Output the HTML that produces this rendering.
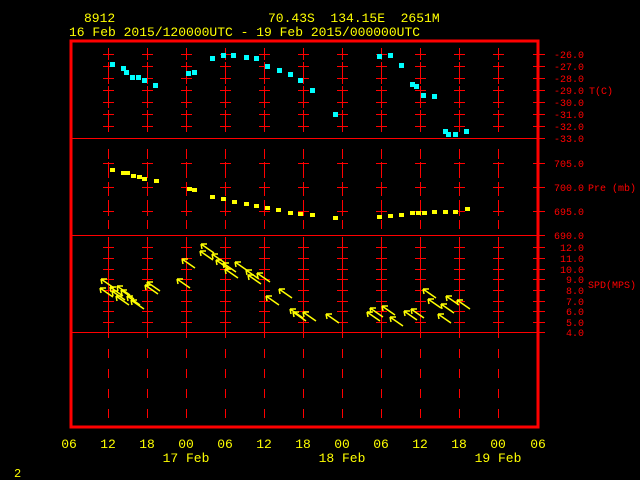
<!DOCTYPE html>
<html><head><style>
body{margin:0;background:#000;width:640px;height:480px;overflow:hidden}
svg{display:block}
text{font-family:"Liberation Mono",monospace}
</style></head><body>
<svg width="640" height="480" viewBox="0 0 640 480" xmlns="http://www.w3.org/2000/svg">
<defs>
<g id="col" fill="#f00">
<rect x="0" y="48" width="1" height="12"/><rect x="0" y="62" width="1" height="22"/><rect x="0" y="86" width="1" height="22"/><rect x="0" y="110" width="1" height="22"/>
<rect x="-5" y="54" width="11" height="1"/><rect x="-5" y="66" width="11" height="1"/><rect x="-5" y="78" width="11" height="1"/><rect x="-5" y="90" width="11" height="1"/><rect x="-5" y="102" width="11" height="1"/><rect x="-5" y="114" width="11" height="1"/><rect x="-5" y="126" width="11" height="1"/>
<rect x="0" y="149" width="1" height="10"/><rect x="0" y="162" width="1" height="16"/><rect x="0" y="182" width="1" height="14"/><rect x="0" y="200" width="1" height="16"/><rect x="0" y="220" width="1" height="9"/>
<rect x="-5" y="163" width="11" height="1"/><rect x="-5" y="187" width="11" height="1"/><rect x="-5" y="211" width="11" height="1"/>
<rect x="0" y="237" width="1" height="101"/>
<rect x="-5" y="247" width="11" height="1"/><rect x="-5" y="258" width="11" height="1"/><rect x="-5" y="269" width="11" height="1"/><rect x="-5" y="279" width="11" height="1"/><rect x="-5" y="290" width="11" height="1"/><rect x="-5" y="301" width="11" height="1"/><rect x="-5" y="311" width="11" height="1"/><rect x="-5" y="322" width="11" height="1"/>
<rect x="0" y="349" width="1" height="9"/><rect x="0" y="369" width="1" height="9"/><rect x="0" y="389" width="1" height="9"/><rect x="0" y="409" width="1" height="9"/>
</g>
<g id="ar" stroke="#ff0" stroke-width="1.5" fill="none"><path d="M0 0L13 9M0 0L6 0M0 0L1 5"/></g>
</defs>
<text x="84" y="22" fill="#ff0" font-size="13">8912</text>
<text x="268" y="22" fill="#ff0" font-size="13" xml:space="preserve">70.43S  134.15E  2651M</text>
<text x="69" y="36" fill="#ff0" font-size="13">16 Feb 2015/120000UTC - 19 Feb 2015/000000UTC</text>
<rect x="71" y="41" width="467" height="386" fill="none" stroke="#f00" stroke-width="3"/>
<g fill="#f00">
<rect x="71" y="138" width="474" height="1"/><rect x="71" y="235" width="474" height="1"/><rect x="71" y="332" width="474" height="1"/>
<rect x="533" y="54" width="12" height="1"/><rect x="533" y="66" width="12" height="1"/><rect x="533" y="78" width="12" height="1"/><rect x="533" y="90" width="12" height="1"/><rect x="533" y="102" width="12" height="1"/><rect x="533" y="114" width="12" height="1"/><rect x="533" y="126" width="12" height="1"/>
<rect x="533" y="163" width="12" height="1"/><rect x="533" y="187" width="12" height="1"/><rect x="533" y="211" width="12" height="1"/>
<rect x="533" y="247" width="12" height="1"/><rect x="533" y="258" width="12" height="1"/><rect x="533" y="269" width="12" height="1"/><rect x="533" y="279" width="12" height="1"/><rect x="533" y="290" width="12" height="1"/><rect x="533" y="301" width="12" height="1"/><rect x="533" y="311" width="12" height="1"/><rect x="533" y="322" width="12" height="1"/>
</g>
<use href="#col" x="108"/><use href="#col" x="147"/><use href="#col" x="186"/><use href="#col" x="225"/><use href="#col" x="264"/><use href="#col" x="303"/><use href="#col" x="342"/><use href="#col" x="381"/><use href="#col" x="420"/><use href="#col" x="459"/><use href="#col" x="498"/>
<g fill="#f00" font-size="10" text-anchor="end">
<text x="584" y="58">-26.0</text><text x="584" y="70">-27.0</text><text x="584" y="82">-28.0</text><text x="584" y="94">-29.0</text><text x="584" y="106">-30.0</text><text x="584" y="118">-31.0</text><text x="584" y="130">-32.0</text><text x="584" y="142">-33.0</text>
<text x="584" y="167">705.0</text><text x="584" y="191">700.0</text><text x="584" y="215">695.0</text><text x="584" y="239">690.0</text>
<text x="584" y="251">12.0</text><text x="584" y="262">11.0</text><text x="584" y="273">10.0</text><text x="584" y="283">9.0</text><text x="584" y="294">8.0</text><text x="584" y="305">7.0</text><text x="584" y="315">6.0</text><text x="584" y="326">5.0</text><text x="584" y="336">4.0</text>
</g>
<g fill="#f00" font-size="10">
<text x="589" y="94">T(C)</text><text x="588" y="191" xml:space="preserve">Pre (mb)</text><text x="588" y="288">SPD(MPS)</text>
</g>
<g fill="#0ff">
<rect x="110" y="62" width="5" height="5"/><rect x="121" y="66" width="5" height="5"/><rect x="124" y="70" width="5" height="5"/><rect x="130" y="75" width="5" height="5"/><rect x="136" y="75" width="5" height="5"/><rect x="142" y="78" width="5" height="5"/><rect x="153" y="83" width="5" height="5"/><rect x="186" y="71" width="5" height="5"/><rect x="192" y="70" width="5" height="5"/><rect x="210" y="56" width="5" height="5"/><rect x="221" y="53" width="5" height="5"/><rect x="231" y="53" width="5" height="5"/><rect x="244" y="55" width="5" height="5"/><rect x="254" y="56" width="5" height="5"/><rect x="265" y="64" width="5" height="5"/><rect x="277" y="68" width="5" height="5"/><rect x="288" y="72" width="5" height="5"/><rect x="298" y="78" width="5" height="5"/><rect x="310" y="88" width="5" height="5"/><rect x="333" y="112" width="5" height="5"/>
<rect x="377" y="54" width="5" height="5"/><rect x="388" y="53" width="5" height="5"/><rect x="399" y="63" width="5" height="5"/><rect x="410" y="82" width="5" height="5"/><rect x="414" y="84" width="5" height="5"/><rect x="421" y="93" width="5" height="5"/><rect x="432" y="94" width="5" height="5"/><rect x="443" y="129" width="5" height="5"/><rect x="446" y="132" width="5" height="5"/><rect x="453" y="132" width="5" height="5"/><rect x="464" y="129" width="5" height="5"/>
</g>
<g fill="#ff0">
<rect x="110" y="168" width="5" height="4"/><rect x="121" y="171" width="5" height="4"/><rect x="125" y="171" width="5" height="4"/><rect x="131" y="174" width="5" height="4"/><rect x="137" y="175" width="5" height="4"/><rect x="142" y="177" width="5" height="4"/><rect x="154" y="179" width="5" height="4"/><rect x="187" y="187" width="5" height="4"/><rect x="192" y="188" width="5" height="4"/><rect x="210" y="195" width="5" height="4"/><rect x="221" y="197" width="5" height="4"/><rect x="232" y="200" width="5" height="4"/><rect x="244" y="202" width="5" height="4"/><rect x="254" y="204" width="5" height="4"/><rect x="265" y="206" width="5" height="4"/><rect x="276" y="208" width="5" height="4"/><rect x="288" y="211" width="5" height="4"/><rect x="298" y="212" width="5" height="4"/><rect x="310" y="213" width="5" height="4"/><rect x="333" y="216" width="5" height="4"/>
<rect x="377" y="215" width="5" height="4"/><rect x="388" y="214" width="5" height="4"/><rect x="399" y="213" width="5" height="4"/><rect x="410" y="211" width="5" height="4"/><rect x="416" y="211" width="5" height="4"/><rect x="422" y="211" width="5" height="4"/><rect x="432" y="210" width="5" height="4"/><rect x="443" y="210" width="5" height="4"/><rect x="453" y="210" width="5" height="4"/><rect x="465" y="207" width="5" height="4"/>
</g>
<use href="#ar" x="101" y="279"/><use href="#ar" x="100" y="288"/><use href="#ar" x="110" y="287"/><use href="#ar" x="112" y="291"/><use href="#ar" x="117" y="286"/><use href="#ar" x="121" y="290"/><use href="#ar" x="116" y="296"/><use href="#ar" x="127" y="296"/><use href="#ar" x="131" y="300"/><use href="#ar" x="147" y="282"/><use href="#ar" x="145" y="285"/><use href="#ar" x="177" y="279"/><use href="#ar" x="182" y="259"/><use href="#ar" x="201" y="244"/><use href="#ar" x="200" y="251"/><use href="#ar" x="212" y="254"/><use href="#ar" x="216" y="260"/><use href="#ar" x="223" y="263"/><use href="#ar" x="225" y="269"/><use href="#ar" x="235" y="262"/><use href="#ar" x="246" y="270"/><use href="#ar" x="248" y="275"/><use href="#ar" x="257" y="273"/><use href="#ar" x="266" y="296"/><use href="#ar" x="279" y="289"/><use href="#ar" x="290" y="309"/><use href="#ar" x="293" y="312"/><use href="#ar" x="303" y="312"/><use href="#ar" x="326" y="314"/><use href="#ar" x="367" y="312"/><use href="#ar" x="370" y="308"/><use href="#ar" x="382" y="306"/><use href="#ar" x="390" y="317"/><use href="#ar" x="404" y="311"/><use href="#ar" x="411" y="309"/><use href="#ar" x="423" y="289"/><use href="#ar" x="428" y="299"/><use href="#ar" x="438" y="314"/><use href="#ar" x="441" y="304"/><use href="#ar" x="446" y="296"/><use href="#ar" x="457" y="300"/>
<g fill="#ff0" font-size="13" text-anchor="middle">
<text x="69" y="448">06</text><text x="108" y="448">12</text><text x="147" y="448">18</text><text x="186" y="448">00</text><text x="225" y="448">06</text><text x="264" y="448">12</text><text x="303" y="448">18</text><text x="342" y="448">00</text><text x="381" y="448">06</text><text x="420" y="448">12</text><text x="459" y="448">18</text><text x="498" y="448">00</text><text x="538" y="448">06</text>
<text x="186" y="462">17 Feb</text><text x="342" y="462">18 Feb</text><text x="498" y="462">19 Feb</text>
</g>
<text x="14" y="477" fill="#ff0" font-size="12">2</text>
</svg>
</body></html>
